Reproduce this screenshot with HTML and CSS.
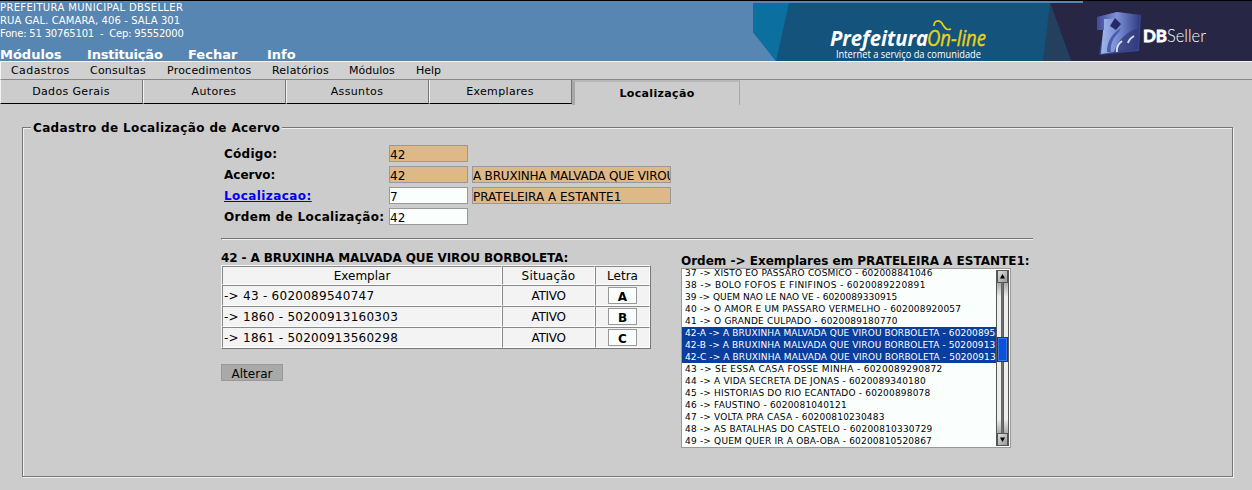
FILE: index.html
```html
<!DOCTYPE html>
<html lang="pt-BR">
<head>
<meta charset="utf-8">
<title>Cadastro de Localização de Acervo</title>
<link rel="stylesheet" href="styles.css">
</head>
<body>
<header class="header">
  <div class="header-info">
    <div class="address"><div class="ad1">PREFEITURA MUNICIPAL DBSELLER</div><div class="ad2">RUA GAL. CAMARA, 406 - SALA 301</div><div class="ad3">Fone: 51 30765101 &nbsp;-&nbsp; Cep: 95552000</div></div>
    <nav class="main-nav"><a class="n1">Módulos</a><a class="n2">Instituição</a><a class="n3">Fechar</a><a class="n4">Info</a></nav>
  </div>
  <svg class="banner" width="499" height="60" viewBox="0 0 499 60">
    <defs>
      <linearGradient id="cube" x1="0" y1="0" x2="1" y2="0"><stop offset="0" stop-color="#3f4a94"/><stop offset=".45" stop-color="#7f92d4"/><stop offset="1" stop-color="#303b7c"/></linearGradient>
      <linearGradient id="face" x1="0" y1="0" x2="1" y2="0"><stop offset="0" stop-color="#9fb8ec"/><stop offset=".5" stop-color="#6f83cc"/><stop offset="1" stop-color="#2f3c82"/></linearGradient>
    </defs>
    <path fill="#14537b" d="M0 2H330V60H23L0 31Z"/>
    <path fill="#0b6f9f" d="M0 2H36L23 60L0 31Z"/>
    <path fill="#272645" d="M297 2H330V0H499V60H318Z"/>
    <path fill="#23415f" d="M297 2L318 60H290Z"/>
    <text class="logo-pre" x="77" y="45" textLength="98" lengthAdjust="spacingAndGlyphs">Prefeitura</text>
    <text class="logo-on" x="174" y="45" textLength="59" lengthAdjust="spacingAndGlyphs">On-line</text>
    <path d="M181 25C181 19 187 18 190 24C193 29 195 29 198 28" fill="none" stroke="#e9d317" stroke-width="1.7"/>
    <text class="logo-sub" x="83" y="57" textLength="145" lengthAdjust="spacingAndGlyphs">Internet a serviço da comunidade</text>
    <path fill="#3c468c" d="M344 16L364 11L388 14L386 50L346 54L348 42L351 29L344 29Z"/>
    <path fill="url(#face)" d="M351 18L387 14L385 47L348 53Z"/>
    <path fill="url(#cube)" d="M344 16L364 11L387 14L368 17L351 18L351 29L344 29Z"/>
    <path fill="#252a66" d="M362 17L368 23L363 29L357 25Z"/>
    <path fill="#4a5caa" d="M354 51C354 39 360 32 368 27L366 31C360 37 357 43 358 51Z"/>
    <path fill="#323b78" d="M361 51C365 38 374 31 385 27V48Z" opacity=".75"/>
    <path d="M364 51C363 46 365 43 369 40M375 42Q376 38 381 35" fill="none" stroke="#cfdcfc" stroke-width="2"/>
    <text class="logo-db" x="390" y="41" textLength="24" lengthAdjust="spacingAndGlyphs">DB</text>
    <text class="logo-seller" x="414" y="41" textLength="39" lengthAdjust="spacingAndGlyphs">Seller</text>
  </svg>
</header>
<nav class="menu"><a class="m1">Cadastros</a><a class="m2">Consultas</a><a class="m3">Procedimentos</a><a class="m4">Relatórios</a><a class="m5">Módulos</a><a class="m6">Help</a></nav>
<nav class="tabs"><a class="tab">Dados Gerais</a><a class="tab">Autores</a><a class="tab">Assuntos</a><a class="tab">Exemplares</a><a class="tab-active">Localização</a></nav>
<fieldset class="panel">
  <legend class="legend">Cadastro de Localização de Acervo</legend>
  <main class="content">
    <form class="form">
      <label class="label codigo">Código:</label><div class="field locked">42</div><span></span>
      <label class="label">Acervo:</label><div class="field locked">42</div><div class="field locked long">A BRUXINHA MALVADA QUE VIROU BORBOLETA</div>
      <label class="label link">Localizacao:</label><div class="field">7</div><div class="field locked estante">PRATELEIRA A ESTANTE1</div>
      <label class="label ordem">Ordem de Localização:</label><div class="field">42</div><span></span>
    </form>
    <div class="rule"></div>
    <div class="columns">
      <section class="copies">
        <div class="title copies-title">42 - A BRUXINHA MALVADA QUE VIROU BORBOLETA:</div>
        <div class="table">
          <div class="cell head">Exemplar</div><div class="cell head situacao">Situação</div><div class="cell head">Letra</div>
          <div class="cell left">-&gt; 43 - 6020089540747</div><div class="cell ativo">ATIVO</div><div class="cell"><b class="letter">A</b></div>
          <div class="cell left">-&gt; 1860 - 50200913160303</div><div class="cell ativo">ATIVO</div><div class="cell"><b class="letter">B</b></div>
          <div class="cell left">-&gt; 1861 - 50200913560298</div><div class="cell ativo">ATIVO</div><div class="cell"><b class="letter">C</b></div>
        </div>
        <div class="button">Alterar</div>
      </section>
      <section class="order">
        <div class="title order-title">Ordem -&gt; Exemplares em PRATELEIRA A ESTANTE1:</div>
        <div class="select">
          <div class="options">
            <div class="option">37 -&gt; XISTO EO PASSARO COSMICO - 602008841046</div>
            <div class="option wide">38 -&gt; BOLO FOFOS E FINIFINOS - 6020089220891</div>
            <div class="option tight">39 -&gt; QUEM NAO LE NAO VE - 6020089330915</div>
            <div class="option">40 -&gt; O AMOR E UM PASSARO VERMELHO - 602008920057</div>
            <div class="option">41 -&gt; O GRANDE CULPADO - 6020089180770</div>
            <div class="option selected">42-A -&gt; A BRUXINHA MALVADA QUE VIROU BORBOLETA - 6020089540747</div>
            <div class="option selected">42-B -&gt; A BRUXINHA MALVADA QUE VIROU BORBOLETA - 50200913160303</div>
            <div class="option selected">42-C -&gt; A BRUXINHA MALVADA QUE VIROU BORBOLETA - 50200913560298</div>
            <div class="option wide">43 -&gt; SE ESSA CASA FOSSE MINHA - 6020089290872</div>
            <div class="option">44 -&gt; A VIDA SECRETA DE JONAS - 6020089340180</div>
            <div class="option">45 -&gt; HISTORIAS DO RIO ECANTADO - 60200898078</div>
            <div class="option">46 -&gt; FAUSTINO - 6020081040121</div>
            <div class="option">47 -&gt; VOLTA PRA CASA - 60200810230483</div>
            <div class="option">48 -&gt; AS BATALHAS DO CASTELO - 60200810330729</div>
            <div class="option">49 -&gt; QUEM QUER IR A OBA-OBA - 60200810520867</div>
          </div>
          <div class="scrollbar">
            <div class="arrow"><svg width="7" height="5"><path d="M1 4.5L3.5 0L6 4.5Z"/></svg></div>
            <div class="track before"></div>
            <div class="thumb"></div>
            <div class="track after"></div>
            <div class="arrow"><svg width="7" height="5"><path d="M1 .5H6L3.5 5Z"/></svg></div>
          </div>
        </div>
      </section>
    </div>
  </main>
</fieldset>
</body>
</html>
```
FILE: styles.css
```css
* { box-sizing: border-box; }
body { margin: 0; height: 490px; overflow: hidden; background: #ccc; color: #000; font: 12px/15px "DejaVu Sans", sans-serif; }
.header { display: flex; justify-content: space-between; height: 61px; border-top: 1px solid #000; background: #5786b2; color: #fff; }
.address { height: 45px; font-size: 10px; line-height: 13px; white-space: nowrap; }
.ad1 { letter-spacing: .35px; }
.ad2 { letter-spacing: .1px; }
.ad3 { letter-spacing: -.2px; }
.main-nav { display: flex; height: 15px; font-size: 13px; line-height: 17px; font-weight: bold; }
.n1 { width: 87px; } .n2 { width: 101px; } .n3 { width: 79px; }
.n2 { letter-spacing: -.2px; }
.banner { display: block; }
.logo-pre { font: italic bold 22px "Open Sans", sans-serif; fill: #fff; }
.logo-on { font: italic 22px "Open Sans", sans-serif; fill: #e9d317; stroke: #e9d317; stroke-width: .4; }
.logo-sub { font: 10px "Open Sans", sans-serif; fill: #fff; }
.logo-db { font: bold 17px Lato, sans-serif; fill: #fff; stroke: #fff; stroke-width: .8; }
.logo-seller { font: 300 18px Lato, sans-serif; fill: #fff; }
.menu { display: flex; height: 19px; padding-left: 10px; border-top: 1px solid #f4f4f4; border-left: 1px solid #f4f4f4; border-bottom: 1px solid #888; background: #d0d0d0; font-size: 11px; line-height: 17px; letter-spacing: .22px; }
.m1 { width: 79px; letter-spacing: .42px; } .m2 { width: 77px; } .m3 { width: 105px; } .m4 { width: 77px; } .m5 { width: 67px; }
.m5, .m6 { letter-spacing: 0; }
.tabs { display: flex; height: 25px; font-size: 11px; text-align: center; letter-spacing: .35px; }
.tab { width: 143px; height: 24px; padding-right: 1px; line-height: 23px; border-left: 1px solid #f2f2f2; border-right: 1px solid #777; border-bottom: 1px solid #000; }
.tab-active { width: 168px; line-height: 23px; border-left: 3px solid #a8a8a8; border-top: 2px solid #b7b7b7; border-right: 1px solid #a8a8a8; font-weight: bold; }
.panel { margin: 15px 19px 0 22px; padding: 1px; height: 357px; min-width: 0; border: 1px solid #777; box-shadow: inset 1px 1px #f0f0f0, 1px 1px #f0f0f0; }
.legend { margin-left: 7px; padding: 1px 2px 0; background: #ccc; font-size: 12px; line-height: 14px; font-weight: bold; letter-spacing: .36px; }
.content { width: 812px; margin: 9px 0 0 197px; }
.form { display: grid; grid-template-columns: 165px 79px 199px; row-gap: 4px; padding-left: 3px; grid-auto-rows: 17px; }
.label { font-weight: bold; line-height: 18px; white-space: nowrap; }
.codigo { letter-spacing: .28px; }
.ordem { letter-spacing: .35px; }
.link { color: #00e; text-decoration: underline; letter-spacing: .42px; }
.field { overflow: hidden; border: 1px solid #999; background: #fafffd; line-height: 18px; white-space: nowrap; }
.locked { background: #deb887; }
.long, .estante { margin-left: 4px; width: 199px; }
.long { letter-spacing: -.2px; }
.rule { height: 2px; margin-top: 13px; border-top: 1px solid #777; border-bottom: 1px solid #f0f0f0; border-left: 1px solid #777; }
.columns { display: flex; }
.copies { width: 460px; padding-top: 10px; }
.title { height: 15px; line-height: 17px; font-weight: bold; white-space: nowrap; }
.copies-title { letter-spacing: -.11px; }
.table { display: grid; grid-template-columns: 280px 93px 55px; grid-template-rows: 19px 21px 21px 21px; width: 430px; height: 84px; border: 1px solid; border-color: #f4f4f4 #777 #777 #f4f4f4; }
.cell { display: flex; align-items: center; justify-content: center; border: 1px solid; border-color: #888 #fff #fff #888; background: #f3f3f3; line-height: 17px; }
.left { justify-content: flex-start; padding-left: 1px; letter-spacing: .27px; }
.situacao { letter-spacing: .25px; }
.ativo { letter-spacing: -.3px; }
.head, .left, .ativo { padding-top: 1px; }
.letter { width: 29px; height: 17px; border: 1px solid #999; background: #fafffd; text-align: center; line-height: 18px; }
.button { width: 62px; height: 17px; margin-top: 15px; border: 1px solid #999; background: #a9a9a7; text-align: center; line-height: 18px; }
.order { padding-top: 13px; }
.select { display: flex; width: 330px; height: 180px; border: 1px solid #999; background: #fafffd; }
.options { width: 314px; height: 178px; overflow: hidden; }
.option { height: 12px; padding-left: 3px; font-size: 9px; line-height: 12px; white-space: nowrap; letter-spacing: .19px; }
.option:first-child { margin-top: -2px; }
.wide { letter-spacing: .35px; }
.tight { letter-spacing: 0; }
.selected { background: #0a3e9c; color: #fff; letter-spacing: .1px; }
.scrollbar { width: 13px; height: 176px; margin-top: 1px; border-left: 1px solid #555; border-right: 1px solid #555; }
.arrow { display: flex; align-items: center; justify-content: center; height: 13px; border: 1px solid #555; background: linear-gradient(135deg, #ddd, #999); }
.track { background: linear-gradient(90deg, transparent 4px, #555 4px, #777 5px, #555 7px, transparent 7px), linear-gradient(#aaa, #eee 14px, #eee); }
.before { height: 54px; }
.after { height: 71px; background: linear-gradient(90deg, transparent 4px, #555 4px, #777 5px, #555 7px, transparent 7px), linear-gradient(#eee, #eee 57px, #aaa); }
.thumb { height: 25px; border: 1px solid #0936a0; background: #0a50da; box-shadow: inset 0 0 0 1px #3b78e8; }
```
